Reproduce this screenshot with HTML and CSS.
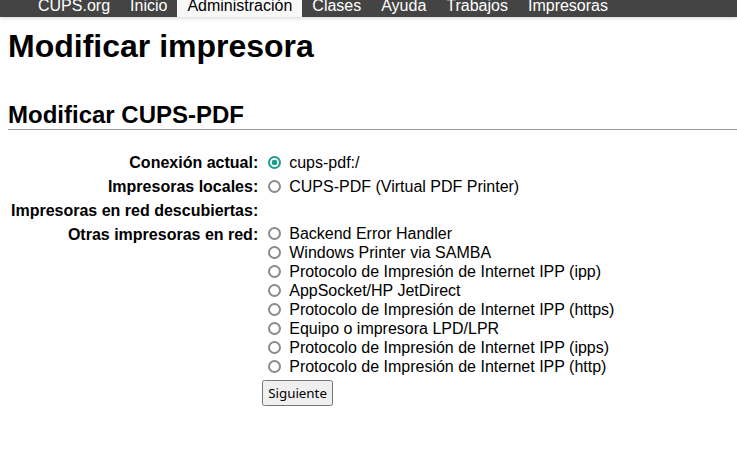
FILE: index.html
```html
<!DOCTYPE html>
<html lang="es">
<head>
<meta charset="utf-8">
<title>Modificar impresora - CUPS</title>
<link rel="stylesheet" href="styles.css">
</head>
<body>
<nav class="header">
  <ul class="menu">
    <li><a href="#">CUPS.org</a></li>
    <li><a href="#">Inicio</a></li>
    <li class="active"><a href="#">Administración</a></li>
    <li><a href="#">Clases</a></li>
    <li><a href="#">Ayuda</a></li>
    <li><a href="#">Trabajos</a></li>
    <li><a href="#">Impresoras</a></li>
  </ul>
</nav>
<main class="body">
  <h1 class="title">Modificar impresora</h1>
  <h2 class="title2">Modificar CUPS-PDF</h2>
  <form class="edit">
    <div class="row">
      <div class="lbl">Conexión actual:</div>
      <div class="val"><label class="opt"><input type="radio" name="device" checked><span>cups-pdf:/</span></label></div>
    </div>
    <div class="row">
      <div class="lbl">Impresoras locales:</div>
      <div class="val"><label class="opt"><input type="radio" name="device"><span>CUPS-PDF (Virtual PDF Printer)</span></label></div>
    </div>
    <div class="row">
      <div class="lbl">Impresoras en red descubiertas:</div>
      <div class="val"></div>
    </div>
    <div class="row">
      <div class="lbl">Otras impresoras en red:</div>
      <div class="val list">
        <label class="opt"><input type="radio" name="device"><span>Backend Error Handler</span></label>
        <label class="opt"><input type="radio" name="device"><span>Windows Printer via SAMBA</span></label>
        <label class="opt"><input type="radio" name="device"><span>Protocolo de Impresión de Internet IPP (ipp)</span></label>
        <label class="opt"><input type="radio" name="device"><span>AppSocket/HP JetDirect</span></label>
        <label class="opt"><input type="radio" name="device"><span>Protocolo de Impresión de Internet IPP (https)</span></label>
        <label class="opt"><input type="radio" name="device"><span>Equipo o impresora LPD/LPR</span></label>
        <label class="opt"><input type="radio" name="device"><span>Protocolo de Impresión de Internet IPP (ipps)</span></label>
        <label class="opt"><input type="radio" name="device"><span>Protocolo de Impresión de Internet IPP (http)</span></label>
      </div>
    </div>
    <div class="row">
      <div class="lbl"></div>
      <div class="val btnrow"><button type="button" class="btn">Siguiente</button></div>
    </div>
  </form>
</main>
</body>
</html>
```

FILE: styles.css
```css
html, body {
  margin: 0;
  padding: 0;
  background: #fff;
}
body {
  font-family: "Liberation Sans", Arial, sans-serif;
  font-size: 16px;
  color: #000;
}
.header {
  height: 17px;
  overflow: hidden;
  background: #444;
  box-shadow: 0 1px 4px rgba(0, 0, 0, 0.18);
  position: relative;
  z-index: 1;
}
.menu {
  list-style: none;
  margin: -5px 0 0 0;
  padding: 0 0 0 28px;
  display: flex;
}
.menu li {
  padding: 0 10px;
  line-height: 22px;
}
.menu a {
  color: #fff;
  text-decoration: none;
}
.menu li.active {
  background: #f8f8f8;
}
.menu li.active a {
  color: #000;
}
.body {
  padding: 0 0 0 8px;
}
.title {
  font-size: 32px;
  font-weight: bold;
  margin: 11px 0 0 0;
  line-height: 37px;
}
.title2 {
  font-size: 24px;
  font-weight: bold;
  margin: 36px 0 0 0;
  line-height: 28px;
  border-bottom: 1px solid #999;
}
.edit {
  margin-top: 20px;
  display: grid;
  grid-template-columns: auto 1fr;
}
.row {
  display: contents;
}
.lbl {
  font-weight: bold;
  text-align: right;
  padding: 3px 5px 2px 3px;
  line-height: 19px;
}
.val {
  padding: 3px 0 2px 0;
  line-height: 19px;
}
.list {
  display: flex;
  flex-direction: column;
  padding-top: 2px;
}
.opt {
  display: flex;
  align-items: flex-start;
  line-height: 19px;
}
.opt input {
  appearance: none;
  -webkit-appearance: none;
  box-sizing: border-box;
  flex: none;
  margin: 3px 8px 0 5px;
  width: 13px;
  height: 13px;
  border: 2px solid #8a8a8a;
  border-radius: 50%;
  background: #fff;
}
.opt input:checked {
  border-color: #1e9c8c;
  background: radial-gradient(circle, #1e9c8c 0 2.6px, #fff 3.1px);
}
.btnrow {
  padding: 0;
}
.btn {
  font-family: "Noto Sans", "DejaVu Sans", sans-serif;
  font-size: 13.33px;
  margin: 2px 0 0 -1px;
  padding: 2px 4px;
}
```
